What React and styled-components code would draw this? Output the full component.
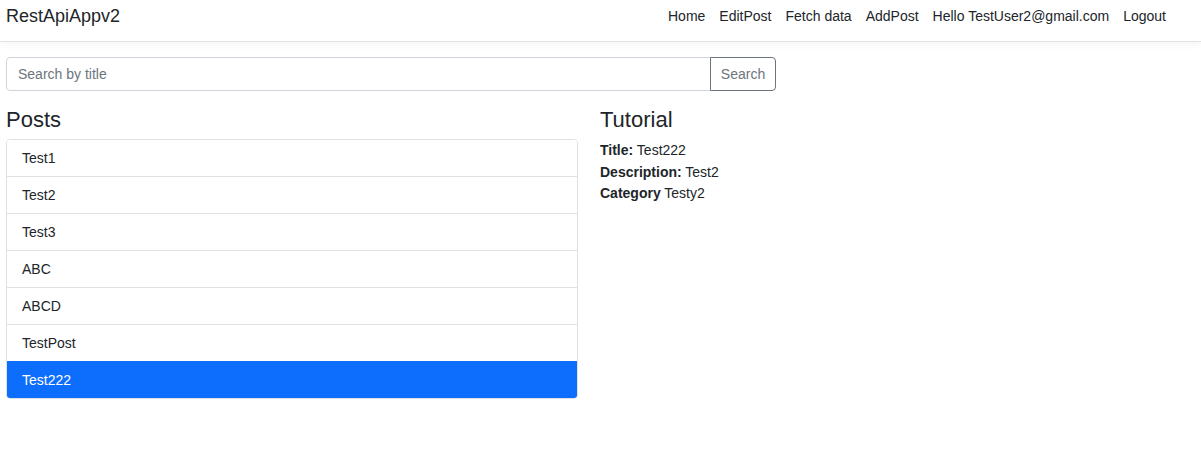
import React from 'react';
import styled, { createGlobalStyle } from 'styled-components';

const posts = ['Test1', 'Test2', 'Test3', 'ABC', 'ABCD', 'TestPost', 'Test222'];
const links = ['Home', 'EditPost', 'Fetch data', 'AddPost', 'Hello TestUser2@gmail.com', 'Logout'];

const GlobalStyle = createGlobalStyle`
  body {
    margin: 0;
    background: #fff;
    color: #212529;
    font-family: "Liberation Sans", Arial, sans-serif;
    font-size: 14px;
    line-height: 1.5;
  }
  * { box-sizing: border-box; }
`;

const App = () => (
  <>
    <GlobalStyle />
    <NavBar>
      <Brand>RestApiAppv2</Brand>
      <NavLinks>
        {links.map((l) => (
          <NavLink key={l}>{l}</NavLink>
        ))}
      </NavLinks>
    </NavBar>

    <Main>
      <SearchGroup>
        <SearchInput placeholder="Search by title" />
        <SearchButton>Search</SearchButton>
      </SearchGroup>

      <Columns>
        <section>
          <Heading>Posts</Heading>
          <List>
            {posts.map((p) => (
              <ListItem key={p} active={p === 'Test222'}>
                {p}
              </ListItem>
            ))}
          </List>
        </section>

        <section>
          <Heading>Tutorial</Heading>
          <Details>
            <Detail>
              <b>Title:</b> Test222
            </Detail>
            <Detail>
              <b>Description:</b> Test2
            </Detail>
            <Detail>
              <b>Category</b> Testy2
            </Detail>
          </Details>
        </section>
      </Columns>
    </Main>
  </>
);

export default App;

const NavBar = styled.nav`
  display: flex;
  align-items: center;
  justify-content: space-between;
  height: 42px;
  padding: 0 28px 9px 6px;
  border-bottom: 1px solid #dee2e6;
  box-shadow: 0 3px 8px rgba(0, 0, 0, 0.04);
`;

const Brand = styled.a`
  font-size: 18px;
  color: #212529;
`;

const NavLinks = styled.div`
  display: flex;
`;

const NavLink = styled.a`
  font-size: 14px;
  color: #212529;
  padding: 0 7px;
`;

const Main = styled.main`
  padding: 15px 6px 0 6px;
`;

const SearchGroup = styled.div`
  display: flex;
  width: 770px;
  height: 34px;
`;

const SearchInput = styled.input`
  flex: 1;
  border: 1px solid #ced4da;
  border-radius: 4px 0 0 4px;
  padding: 0 11px;
  font: inherit;
  font-size: 14px;
  color: #212529;
  outline: none;

  &::placeholder {
    color: #6c757d;
  }
`;

const SearchButton = styled.button`
  width: 66px;
  border: 1px solid #6c757d;
  border-radius: 0 4px 4px 0;
  background: #fff;
  color: #6c757d;
  font: inherit;
  font-size: 14px;
  margin-left: -1px;
`;

const Columns = styled.div`
  display: grid;
  grid-template-columns: 572px 1fr;
  column-gap: 22px;
  margin-top: 16px;
`;

const Heading = styled.h4`
  margin: 0 0 6px 0;
  font-size: 22px;
  font-weight: 500;
  line-height: 1.2;
`;

const List = styled.ul`
  list-style: none;
  margin: 0;
  padding: 0;
  border: 1px solid #dee2e6;
  border-radius: 4px;
  overflow: hidden;
`;

const ListItem = styled.li`
  height: 37px;
  padding: 0 15px;
  display: flex;
  align-items: center;
  font-size: 14px;
  background: ${(p) => (p.active ? '#0d6efd' : '#fff')};
  color: ${(p) => (p.active ? '#fff' : '#212529')};
  border-top: 1px solid ${(p) => (p.active ? '#0d6efd' : '#dee2e6')};

  &:first-child {
    border-top: none;
    height: 36px;
  }
`;

const Details = styled.div`
  padding-top: 1px;
`;

const Detail = styled.div`
  font-size: 14px;
  line-height: 21.5px;

  b {
    font-weight: 700;
  }
`;
